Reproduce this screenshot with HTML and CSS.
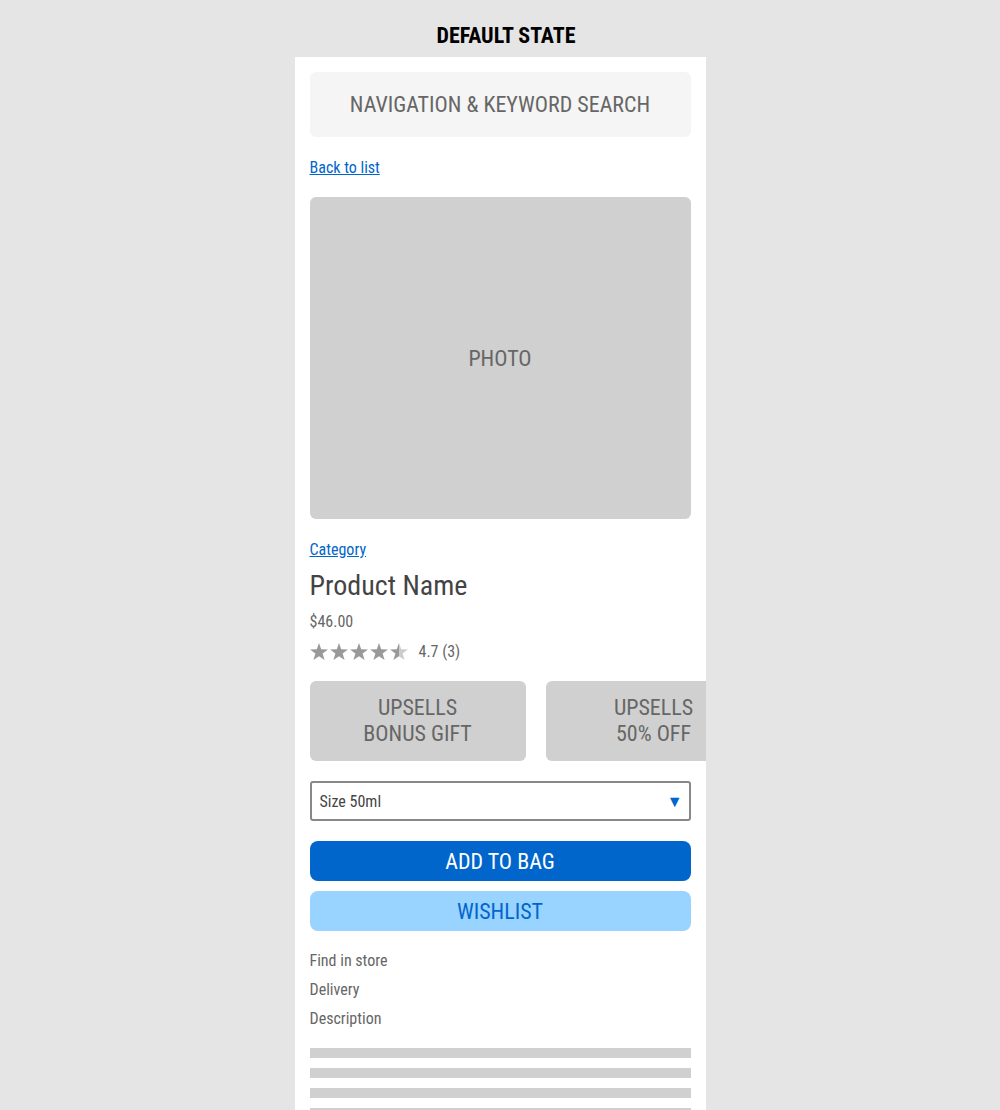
FILE: index.html
```html
<!DOCTYPE html>
<html lang="en">
<head>
  <meta charset="UTF-8" />
  <title>Product - Default State</title>
  <link rel="stylesheet" href="styles.css">
</head>

<body>
  <h2 class="state-title">DEFAULT STATE</h2>

  <div class="phone">
    <div class="nav-box">NAVIGATION &amp; KEYWORD SEARCH</div>

    <div class="link-row back-row"><a class="link" href="#">Back to list</a></div>

    <div class="photo">PHOTO</div>

    <div class="link-row category-row"><a class="link" href="#">Category</a></div>
    <h1 class="product-name">Product Name</h1>
    <div class="price">$46.00</div>

    <div class="rating">
      <svg class="stars" width="100" height="18" viewBox="0 0 100 18">
        <defs>
          <linearGradient id="half">
            <stop offset="50%" stop-color="#999" />
            <stop offset="50%" stop-color="#ccc" />
          </linearGradient>
          <polygon id="star" points="9,0 11.2,6.3 18,6.5 12.6,10.6 14.6,17 9,13.2 3.4,17 5.4,10.6 0,6.5 6.8,6.3" />
        </defs>
        <use href="#star" x="0" fill="#999" />
        <use href="#star" x="20" fill="#999" />
        <use href="#star" x="40" fill="#999" />
        <use href="#star" x="60" fill="#999" />
        <use href="#star" x="80" fill="url(#half)" />
      </svg>
      <span class="rating-text">4.7 (3)</span>
    </div>

    <div class="upsells">
      <div class="upsell-card">UPSELLS<br>BONUS GIFT</div>
      <div class="upsell-card">UPSELLS<br>50% OFF</div>
    </div>

    <div class="size-select">
      <span>Size 50ml</span>
      <span class="arrow">&#9660;</span>
    </div>

    <button class="btn btn-primary">ADD TO BAG</button>
    <button class="btn btn-secondary">WISHLIST</button>

    <ul class="info-links">
      <li>Find in store</li>
      <li>Delivery</li>
      <li>Description</li>
    </ul>

    <div class="text-lines">
      <div class="line"></div>
      <div class="line"></div>
      <div class="line"></div>
      <div class="line"></div>
    </div>
  </div>
</body>
</html>
```

FILE: styles.css
```css
/* === Basic Reset === */
* {
  margin: 0;
  padding: 0;
  box-sizing: border-box;
}

body {
  font-family: 'Roboto Condensed', 'Roboto', 'Liberation Sans Narrow', sans-serif;
  font-stretch: condensed;
  background: #e5e5e5;
  color: #666;
  height: 1110px;
  overflow: hidden;
}

.state-title {
  font-size: 22px;
  font-weight: bold;
  color: #000;
  line-height: 26px;
  text-align: center;
  padding: 23px 0 8px 12px;
}

.phone {
  width: 411px;
  height: 1053px;
  margin: 0 auto;
  background: #fff;
  padding: 15px;
  overflow: hidden;
}

.nav-box {
  height: 65px;
  background: #f5f5f5;
  border-radius: 6px;
  display: flex;
  align-items: center;
  justify-content: center;
  font-size: 22px;
  color: #666;
}

.link-row {
  font-size: 16px;
  line-height: 20px;
}

.link {
  color: #0066cc;
  text-decoration: underline;
}

.back-row {
  margin: 21px 0 19px;
}

.photo {
  height: 322px;
  background: #d0d0d0;
  border-radius: 6px;
  display: flex;
  align-items: center;
  justify-content: center;
  font-size: 22px;
  color: #666;
}

.category-row {
  margin-top: 21px;
}

.product-name {
  font-size: 28px;
  font-weight: normal;
  color: #444;
  line-height: 34px;
  margin-top: 9px;
}

.price {
  font-size: 16px;
  line-height: 20px;
  margin-top: 9px;
}

.rating {
  display: flex;
  align-items: center;
  gap: 9px;
  margin-top: 10px;
  font-size: 16px;
  line-height: 20px;
}

.stars {
  display: block;
}

.upsells {
  display: flex;
  gap: 20px;
  margin-top: 19px;
}

.upsell-card {
  flex: 0 0 216px;
  height: 80px;
  background: #d0d0d0;
  border-radius: 6px;
  display: flex;
  align-items: center;
  justify-content: center;
  text-align: center;
  font-size: 22px;
  line-height: 26px;
  color: #666;
}

.size-select {
  height: 40px;
  margin-top: 20px;
  border: 2px solid #888;
  border-radius: 3px;
  display: flex;
  align-items: center;
  justify-content: space-between;
  padding: 0 6px 0 8px;
  font-size: 16px;
  color: #444;
}

.arrow {
  color: #0066cc;
  font-size: 16px;
}

.btn {
  display: block;
  width: 100%;
  height: 40px;
  border: none;
  border-radius: 8px;
  font-family: inherit;
  font-stretch: condensed;
  font-size: 22px;
}

.btn-primary {
  margin-top: 20px;
  background: #0066cc;
  color: #fff;
}

.btn-secondary {
  margin-top: 10px;
  background: #99d3ff;
  color: #0066cc;
}

.info-links {
  list-style: none;
  margin-top: 15px;
  font-size: 16px;
  line-height: 29px;
}

.text-lines {
  margin-top: 15px;
  display: flex;
  flex-direction: column;
  gap: 10px;
}

.line {
  height: 10px;
  background: #d0d0d0;
}
```
